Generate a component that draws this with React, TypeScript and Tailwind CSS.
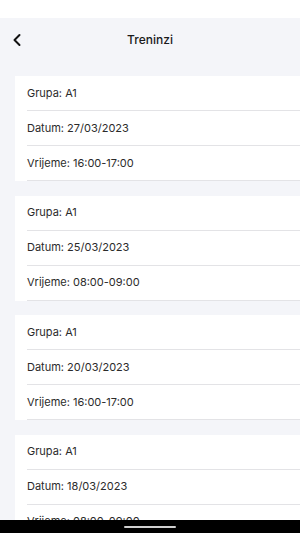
import { ChevronLeft } from "lucide-react";

const trainings = [
  { group: "A1", date: "27/03/2023", time: "16:00-17:00" },
  { group: "A1", date: "25/03/2023", time: "08:00-09:00" },
  { group: "A1", date: "20/03/2023", time: "16:00-17:00" },
  { group: "A1", date: "18/03/2023", time: "08:00-09:00" },
];

function Row({ label }: { label: string }) {
  return (
    <div className="h-[35px] pl-[12px]">
      <div className="h-full flex items-center border-b border-[#e3e3e6] text-[11px] text-[#2b2b2b]">
        {label}
      </div>
    </div>
  );
}

export default function App() {
  return (
    <div
      className="relative h-[533px] w-[300px] overflow-hidden bg-[#f4f5f9]"
      style={{ fontFamily: "Inter, 'Noto Sans', sans-serif" }}
    >
      {/* status bar */}
      <div className="h-[18px] bg-white" />

      {/* header */}
      <div className="relative h-[44px] flex items-center justify-center">
        <ChevronLeft className="absolute left-[7px] w-[20px] h-[20px] text-[#111]" strokeWidth={2.4} />
        <span className="text-[12px] font-medium text-[#1a1a1a]">Treninzi</span>
      </div>

      <div className="pt-[14px] flex flex-col gap-[14.5px]">
        {trainings.map((t, i) => (
          <div key={i} className="ml-[15px] bg-white">
            <Row label={`Grupa: ${t.group}`} />
            <Row label={`Datum: ${t.date}`} />
            <Row label={`Vrijeme: ${t.time}`} />
          </div>
        ))}
      </div>

      {/* system nav bar */}
      <div className="absolute bottom-0 left-0 right-0 h-[13px] bg-black flex items-center justify-center">
        <div className="w-[52px] h-[2px] rounded-full bg-[#d0d0d0]" />
      </div>
    </div>
  );
}
